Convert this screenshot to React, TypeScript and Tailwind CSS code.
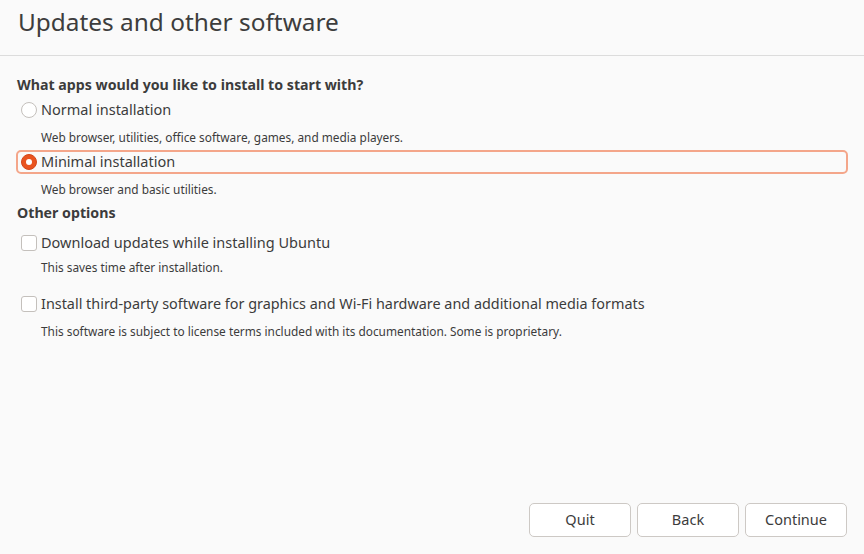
import React from "react";

function Radio({ checked }: { checked?: boolean }) {
  if (checked) {
    return (
      <span className="w-4 h-4 rounded-full bg-[#e95420] border border-[#d4471a] flex items-center justify-center shrink-0">
        <span className="w-[6px] h-[6px] rounded-full bg-white" />
      </span>
    );
  }
  return <span className="w-4 h-4 rounded-full bg-white border border-[#c4c0bc] shrink-0" />;
}

function Check() {
  return <span className="w-4 h-4 rounded-[3px] bg-white border border-[#c4c0bc] shrink-0" />;
}

export default function App() {
  return (
    <div
      className="w-[864px] h-[554px] bg-[#fafafa] flex flex-col text-[#3c3c3c]"
      style={{ fontFamily: "'Noto Sans', sans-serif" }}
    >
      <div className="h-[56px] border-b border-[#dcdcdc] px-[18px] flex items-start shrink-0">
        <h1 className="text-[24.4px] leading-[44px] text-[#3d3d3d]">Updates and other software</h1>
      </div>

      <div className="flex-1 flex flex-col px-[16px]">
        <div className="mt-[19px] h-[20px] flex items-center pl-[1px] text-[14.2px] font-bold">
          What apps would you like to install to start with?
        </div>
        <div className="mt-[3px] h-[24px] border-2 border-transparent rounded-[5px] flex items-center gap-[4px] pl-[3px] text-[14.5px]">
          <Radio />
          <span>Normal installation</span>
        </div>
        <div className="mt-[7px] h-[18px] flex items-center pl-[25px] text-[11.85px]">
          Web browser, utilities, office software, games, and media players.
        </div>
        <div className="mt-[3px] h-[24px] w-[832px] border-2 border-[#f4a68a] rounded-[5px] flex items-center gap-[4px] pl-[3px] text-[14.5px]">
          <Radio checked />
          <span>Minimal installation</span>
        </div>
        <div className="mt-[7px] h-[18px] flex items-center pl-[25px] text-[11.85px]">
          Web browser and basic utilities.
        </div>
        <div className="mt-[4px] h-[20px] flex items-center pl-[1px] text-[14.2px] font-bold">Other options</div>
        <div className="mt-[8px] h-[24px] border-2 border-transparent flex items-center gap-[4px] pl-[3px] text-[14.5px]">
          <Check />
          <span>Download updates while installing Ubuntu</span>
        </div>
        <div className="mt-[4px] h-[18px] flex items-center pl-[25px] text-[11.85px]">
          This saves time after installation.
        </div>
        <div className="mt-[15px] h-[24px] border-2 border-transparent flex items-center gap-[4px] pl-[3px] text-[14.4px]">
          <Check />
          <span>Install third-party software for graphics and Wi-Fi hardware and additional media formats</span>
        </div>
        <div className="mt-[7px] h-[18px] flex items-center pl-[25px] text-[11.85px]">
          This software is subject to license terms included with its documentation. Some is proprietary.
        </div>
      </div>

      <div className="flex justify-end gap-[6px] pr-[17px] pb-[17px] shrink-0">
        {["Quit", "Back", "Continue"].map((l) => (
          <button
            key={l}
            className="w-[102px] h-[34px] rounded-[5px] border border-[#cdc9c5] bg-white text-[14.5px] text-[#3c3c3c] flex items-center justify-center"
          >
            {l}
          </button>
        ))}
      </div>
    </div>
  );
}
